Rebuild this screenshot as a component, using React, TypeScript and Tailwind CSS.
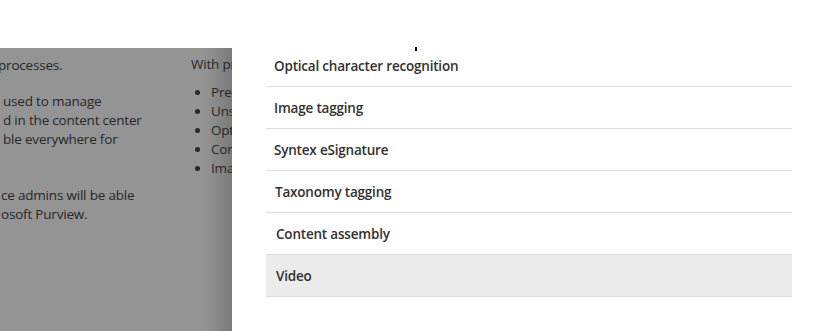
import React from "react";

const items = [
  { label: "Optical character recognition", pad: "pl-[8px]" },
  { label: "Image tagging", pad: "pl-[8px]" },
  { label: "Syntex eSignature", pad: "pl-[8px]" },
  { label: "Taxonomy tagging", pad: "pl-[9px]" },
  { label: "Content assembly", pad: "pl-[10px]" },
  { label: "Video", pad: "pl-[10px]", hover: true },
];

const bullets = ["Prebuilt", "Unstructured", "Optical", "Content", "Image"];

const App: React.FC = () => {
  return (
    <div className="relative flex w-[823px] h-[331px] overflow-hidden bg-white font-['Segoe_UI','Open_Sans',sans-serif]">
      {/* page behind the panel, dimmed */}
      <div className="flex flex-col w-[232px] shrink-0">
        <div className="h-[48px] bg-white" />
        <div className="flex-1 flex overflow-hidden text-[13.5px] tracking-[-0.2px] leading-[19px] text-[#272727] bg-[linear-gradient(to_right,#949494_0px,#949494_205px,#7a7a7a_232px)]">
          <div className="w-[191px] shrink-0 pt-[8px] whitespace-nowrap">
            <p className="-ml-[2px]">processes.</p>
            <div className="mt-[17px] pl-[3px]">
              <p>used to manage</p>
              <p>d in the content center</p>
              <p>ble everywhere for</p>
            </div>
            <div className="mt-[37px] pl-[1px]">
              <p>ce admins will be able</p>
              <p>osoft Purview.</p>
            </div>
          </div>
          <div className="pt-[7px] whitespace-nowrap">
            <p>With previews</p>
            <ul className="mt-[9px] list-disc pl-[20px]">
              {bullets.map((b) => (
                <li key={b} className="leading-[19px] marker:text-[#272727]">
                  {b}
                </li>
              ))}
            </ul>
          </div>
        </div>
      </div>

      {/* side panel */}
      <div className="flex-1 bg-white pt-[45px] pl-[34px] pr-[31px]">
        <ul>
          {items.map((it) => (
            <li
              key={it.label}
              className={`h-[42px] flex items-center pt-[2px] border-b border-[#e1dfdd] ${it.pad} text-[13.5px] tracking-[-0.2px] font-semibold text-[#323130] ${
                it.hover ? "bg-[#ececec]" : ""
              }`}
            >
              {it.label}
            </li>
          ))}
        </ul>
      </div>

      <div className="absolute left-[415px] top-[47px] w-[2px] h-[4px] bg-black" />
    </div>
  );
};

export default App;
